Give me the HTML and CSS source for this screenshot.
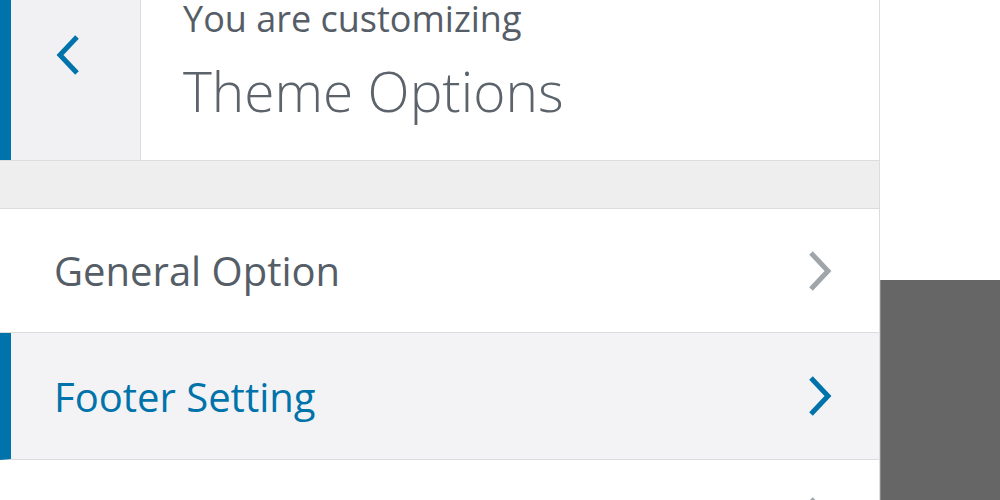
FILE: index.html
```html
<!DOCTYPE html>
<html>
<head>
<meta charset="utf-8">
<link rel="stylesheet" href="styles.css">
</head>
<body>
<div class="panel">
  <div class="header">
    <div class="back">
      <svg class="back-icon" width="26" height="42" viewBox="0 0 26 42"><polyline points="21,3 4,21 21,39" fill="none" stroke="#0073aa" stroke-width="5" stroke-linejoin="miter"/></svg>
    </div>
    <div class="info">
      <div class="customizing">You are customizing</div>
      <div class="title">Theme Options</div>
    </div>
  </div>
  <div class="band"></div>
  <div class="row">
    <span class="label">General Option</span>
    <svg class="chev" width="26" height="42" viewBox="0 0 26 42"><polyline points="4,3 21,21 4,39" fill="none" stroke="#a0a5aa" stroke-width="5"/></svg>
  </div>
  <div class="row active">
    <span class="label">Footer Setting</span>
    <svg class="chev" width="26" height="42" viewBox="0 0 26 42"><polyline points="4,3 21,21 4,39" fill="none" stroke="#0073aa" stroke-width="5"/></svg>
  </div>
  <div class="row last">
    <span class="label"></span>
    <svg class="chev" width="26" height="42" viewBox="0 0 26 42"><polyline points="4,3 21,21 4,39" fill="none" stroke="#a0a5aa" stroke-width="5"/></svg>
  </div>
</div>
<div class="preview">
  <div class="preview-top"></div>
  <div class="preview-dark"></div>
</div>
</body>
</html>
```
FILE: styles.css
```css
html, body {
  margin: 0;
  padding: 0;
}
body {
  width: 1000px;
  height: 500px;
  overflow: hidden;
  display: flex;
  font-family: "Open Sans", "Noto Sans", sans-serif;
  background: #fff;
}
.panel {
  width: 879px;
  height: 500px;
  overflow: hidden;
  flex: none;
  border-right: 1px solid #dcdcde;
  background: #fff;
  display: flex;
  flex-direction: column;
}
.header {
  height: 160px;
  flex: none;
  display: flex;
  border-bottom: 1px solid #dcdcde;
}
.back {
  width: 141px;
  box-sizing: border-box;
  border-left: 11px solid #0073aa;
  border-right: 1px solid #dcdcde;
  background: #f1f1f3;
  display: flex;
  align-items: flex-start;
  padding-left: 45px;
  padding-top: 34px;
}
.info {
  padding-left: 42px;
  color: #555d66;
}
.customizing {
  font-size: 36px;
  line-height: 38px;
}
.title {
  font-size: 55px;
  font-weight: 300;
  line-height: 70px;
  margin-top: 18px;
  color: #5c636b;
}
.band {
  height: 47px;
  flex: none;
  background: #eeeeee;
  border-bottom: 1px solid #dcdcde;
}
.row {
  height: 124px;
  flex: none;
  box-sizing: border-box;
  border-bottom: 1px solid #dcdcde;
  display: flex;
  align-items: center;
  justify-content: space-between;
  padding-left: 54px;
  padding-right: 46px;
  color: #555d66;
  font-size: 40px;
  font-weight: 500;
}
.row.active {
  height: 127px;
  background: #f3f3f5;
  color: #0073aa;
  border-left: 11px solid #0073aa;
  padding-left: 43px;
}
.row.last {
  align-items: flex-start;
  padding-top: 36px;
}
.label {
  display: block;
}
.chev {
  display: block;
}
.preview {
  flex: 1;
  display: flex;
  flex-direction: column;
}
.preview-top {
  height: 280px;
  background: #fff;
}
.preview-dark {
  flex: 1;
  background: #666666;
  border-left: 1px solid #888;
}
```
